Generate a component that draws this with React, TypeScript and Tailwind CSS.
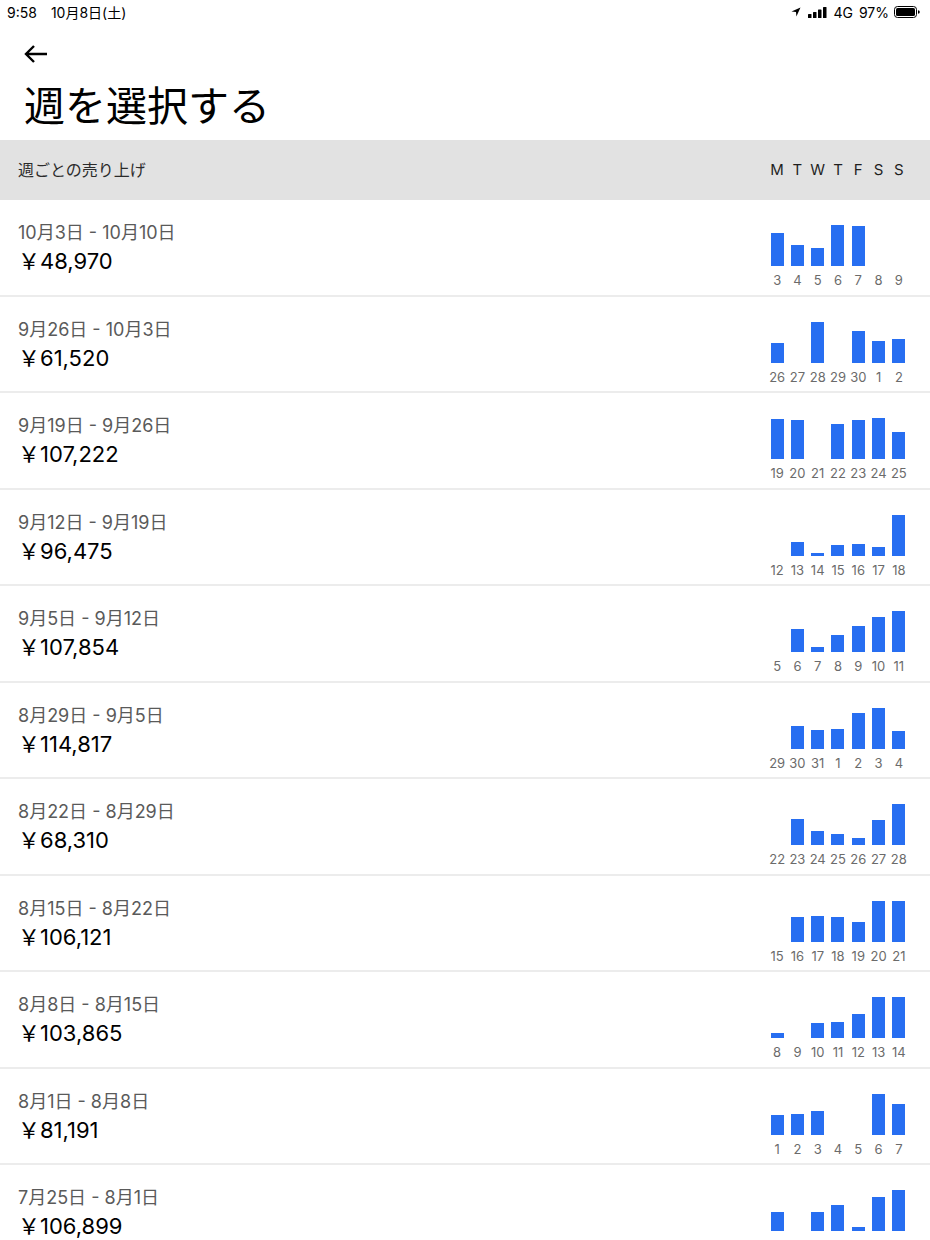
const font = { fontFamily: 'Inter, "Noto Sans CJK JP", sans-serif' };

type Week = {
  range: string;
  total: string;
  days: number[];
  bars: number[];
};

const weeks: Week[] = [
  { range: "10月3日 - 10月10日", total: "￥48,970", days: [3, 4, 5, 6, 7, 8, 9], bars: [33, 21, 18, 41, 40, 0, 0] },
  { range: "9月26日 - 10月3日", total: "￥61,520", days: [26, 27, 28, 29, 30, 1, 2], bars: [20, 0, 41, 0, 32, 22, 24] },
  { range: "9月19日 - 9月26日", total: "￥107,222", days: [19, 20, 21, 22, 23, 24, 25], bars: [40, 39, 0, 35, 39, 41, 27] },
  { range: "9月12日 - 9月19日", total: "￥96,475", days: [12, 13, 14, 15, 16, 17, 18], bars: [0, 14, 3, 11, 12, 9, 41] },
  { range: "9月5日 - 9月12日", total: "￥107,854", days: [5, 6, 7, 8, 9, 10, 11], bars: [0, 23, 5, 17, 26, 35, 41] },
  { range: "8月29日 - 9月5日", total: "￥114,817", days: [29, 30, 31, 1, 2, 3, 4], bars: [0, 23, 19, 20, 36, 41, 18] },
  { range: "8月22日 - 8月29日", total: "￥68,310", days: [22, 23, 24, 25, 26, 27, 28], bars: [0, 26, 14, 11, 7, 25, 41] },
  { range: "8月15日 - 8月22日", total: "￥106,121", days: [15, 16, 17, 18, 19, 20, 21], bars: [0, 25, 26, 25, 20, 41, 41] },
  { range: "8月8日 - 8月15日", total: "￥103,865", days: [8, 9, 10, 11, 12, 13, 14], bars: [5, 0, 15, 16, 24, 41, 41] },
  { range: "8月1日 - 8月8日", total: "￥81,191", days: [1, 2, 3, 4, 5, 6, 7], bars: [20, 21, 24, 0, 0, 41, 31] },
  { range: "7月25日 - 8月1日", total: "￥106,899", days: [25, 26, 27, 28, 29, 30, 31], bars: [19, 0, 19, 26, 4, 34, 41] },
];

const weekdays = ["M", "T", "W", "T", "F", "S", "S"];

const StatusBar = () => (
  <div className="flex h-[24px] items-center justify-between pl-[7px] pr-[10px] text-[14px] text-black">
    <div className="flex items-center gap-[14px]">
      <span>9:58</span>
      <span>10月8日(土)</span>
    </div>
    <div className="flex items-center gap-[5px]">
      {/* location arrow */}
      <svg width="10" height="10" viewBox="0 0 10 10">
        <path d="M9.5 0.5 L0.5 4.6 L5 5 L5.4 9.5 Z" fill="black" />
      </svg>
      {/* signal */}
      <svg width="19" height="11" viewBox="0 0 19 11" className="ml-[2px]">
        <rect x="0" y="7" width="3.5" height="4" rx="0.6" fill="black" />
        <rect x="5" y="5" width="3.5" height="6" rx="0.6" fill="black" />
        <rect x="10" y="2.5" width="3.5" height="8.5" rx="0.6" fill="black" />
        <rect x="15" y="0" width="3.5" height="11" rx="0.6" fill="black" />
      </svg>
      <span className="ml-[1px]">4G</span>
      <span className="ml-[1px]">97%</span>
      <svg width="26" height="12" viewBox="0 0 26 12">
        <rect x="0.5" y="0.5" width="22" height="11" rx="3" fill="none" stroke="black" strokeWidth="1" />
        <rect x="2" y="2" width="19" height="8" rx="1.6" fill="black" />
        <path d="M24 4.2 v3.6 a1.6 1.6 0 0 0 0 -3.6 z" fill="black" />
      </svg>
    </div>
  </div>
);

const WeekRow = ({ week }: { week: Week }) => (
  <div className="flex h-[96.5px] border-b-2 border-[#ececec] pl-[18px]">
    <div className="flex-1 pt-[21px]">
      <div className="text-[18px] leading-[24px] text-[#5a5a5a]">{week.range}</div>
      <div className="text-[22px] leading-[32px] text-black">{week.total}</div>
    </div>
    <div className="mr-[21px] w-[142px] pt-[25px]">
      <div className="grid h-[41px] grid-cols-7 items-end">
        {week.bars.map((h, i) => (
          <div key={i} className="flex justify-center">
            {h > 0 && <div className="w-[13px] bg-[#276ef1]" style={{ height: h }} />}
          </div>
        ))}
      </div>
      <div className="mt-[6px] grid grid-cols-7 text-center text-[13px] leading-[16px] text-[#6b6b6b]">
        {week.days.map((d, i) => (
          <span key={i}>{d}</span>
        ))}
      </div>
    </div>
  </div>
);

export default function App() {
  return (
    <div className="h-[1240px] w-[930px] overflow-hidden bg-white" style={font}>
      <StatusBar />
      <div className="pl-[24px] pt-[21px]">
        <svg width="24" height="18" viewBox="0 0 24 18" className="block">
          <path d="M23 9 H2 M10 1 L2 9 L10 17" fill="none" stroke="black" strokeWidth="2.4" />
        </svg>
        <h1 className="mt-[15px] text-[41px] leading-[56px] font-normal text-black">週を選択する</h1>
      </div>
      <div className="mt-[6px] flex h-[60px] items-center bg-[#e2e2e2] pl-[18px]">
        <div className="flex-1 text-[16px] text-[#2b2b2b]">週ごとの売り上げ</div>
        <div className="mr-[21px] grid w-[142px] grid-cols-7 text-center text-[15px] text-[#1f1f1f]">
          {weekdays.map((d, i) => (
            <span key={i}>{d}</span>
          ))}
        </div>
      </div>
      {weeks.map((w) => (
        <WeekRow key={w.range} week={w} />
      ))}
    </div>
  );
}
